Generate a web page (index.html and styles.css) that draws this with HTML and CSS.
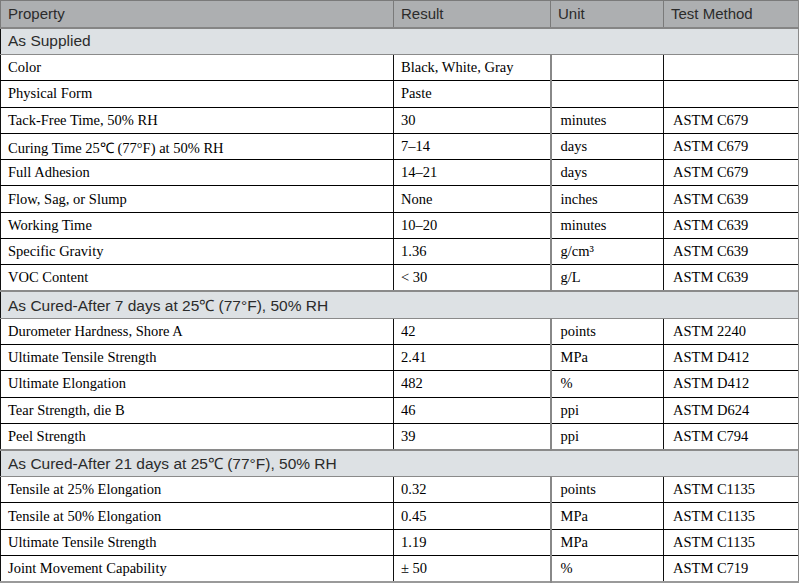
FILE: index.html
```html
<!DOCTYPE html>
<html lang="en">
<head>
    <meta charset="UTF-8">
    <meta name="viewport" content="width=device-width, initial-scale=1.0">
    <title>Technical Data</title>
    <link rel="stylesheet" href="styles.css">
</head>
<body>

<table class="spec-table">
    <colgroup>
        <col class="col-prop">
        <col class="col-result">
        <col class="col-unit">
        <col class="col-method">
    </colgroup>
    <thead>
        <tr class="head-row">
            <th>Property</th>
            <th>Result</th>
            <th>Unit</th>
            <th>Test Method</th>
        </tr>
    </thead>
    <tbody>
        <tr class="section-row"><td colspan="4">As Supplied</td></tr>
        <tr><td>Color</td><td>Black, White, Gray</td><td></td><td></td></tr>
        <tr><td>Physical Form</td><td>Paste</td><td></td><td></td></tr>
        <tr><td>Tack-Free Time, 50% RH</td><td>30</td><td>minutes</td><td>ASTM C679</td></tr>
        <tr><td>Curing Time 25℃ (77°F) at 50% RH</td><td>7–14</td><td>days</td><td>ASTM C679</td></tr>
        <tr><td>Full Adhesion</td><td>14–21</td><td>days</td><td>ASTM C679</td></tr>
        <tr><td>Flow, Sag, or Slump</td><td>None</td><td>inches</td><td>ASTM C639</td></tr>
        <tr><td>Working Time</td><td>10–20</td><td>minutes</td><td>ASTM C639</td></tr>
        <tr><td>Specific Gravity</td><td>1.36</td><td>g/cm³</td><td>ASTM C639</td></tr>
        <tr><td>VOC Content</td><td>&lt; 30</td><td>g/L</td><td>ASTM C639</td></tr>

        <tr class="section-row"><td colspan="4">As Cured-After 7 days at 25℃ (77°F), 50% RH</td></tr>
        <tr><td>Durometer Hardness, Shore A</td><td>42</td><td>points</td><td>ASTM 2240</td></tr>
        <tr><td>Ultimate Tensile Strength</td><td>2.41</td><td>MPa</td><td>ASTM D412</td></tr>
        <tr><td>Ultimate Elongation</td><td>482</td><td>%</td><td>ASTM D412</td></tr>
        <tr><td>Tear Strength, die B</td><td>46</td><td>ppi</td><td>ASTM D624</td></tr>
        <tr><td>Peel Strength</td><td>39</td><td>ppi</td><td>ASTM C794</td></tr>

        <tr class="section-row"><td colspan="4">As Cured-After 21 days at 25℃ (77°F), 50% RH</td></tr>
        <tr><td>Tensile at 25% Elongation</td><td>0.32</td><td>points</td><td>ASTM C1135</td></tr>
        <tr><td>Tensile at 50% Elongation</td><td>0.45</td><td>MPa</td><td>ASTM C1135</td></tr>
        <tr><td>Ultimate Tensile Strength</td><td>1.19</td><td>MPa</td><td>ASTM C1135</td></tr>
        <tr><td>Joint Movement Capability</td><td>± 50</td><td>%</td><td>ASTM C719</td></tr>
    </tbody>
</table>

</body>
</html>
```

FILE: styles.css
```css
* {
    margin: 0;
    padding: 0;
    box-sizing: border-box;
}

body {
    background: #fff;
    font-family: "Liberation Serif", "Times New Roman", serif;
    overflow: hidden;
}

.spec-table {
    width: 798px;
    border-collapse: collapse;
    table-layout: fixed;
    border-left: 1px solid #8a8a8a;
    border-right: 2px solid #8a8a8a;
    border-top: 1px solid #8a8a8a;
    border-bottom: 2px solid #9a9a9a;
}

.col-prop { width: 393px; }
.col-result { width: 157px; }
.col-unit { width: 113px; }
.col-method { width: 135px; }

.spec-table td,
.spec-table th {
    height: 26.3px;
    padding: 0 7px;
    text-align: left;
    vertical-align: middle;
    font-size: 14.5px;
    font-weight: normal;
    color: #000;
    white-space: nowrap;
    border-top: 1px solid #000;
    border-bottom: 1px solid #000;
    border-left: 1px solid #111;
    border-right: 1px solid #111;
}

.spec-table td:nth-child(2) {
    border-right: 2px solid #888;
}

.spec-table td:nth-child(3),
.spec-table td:nth-child(4) {
    padding-left: 9px;
}

.head-row th {
    background: #adafb1;
    font-family: "Liberation Sans", Arial, sans-serif;
    font-size: 15px;
    color: #2b2b2b;
    border: 1px solid #7a7a7a;
    border-bottom: 2px solid #858585;
    height: 27px;
}

.section-row td {
    background: #dde1e4;
    font-family: "Liberation Sans", Arial, sans-serif;
    font-size: 15.5px;
    color: #2b2b2b;
    border-top: 2px solid #8a8a8a;
    border-bottom: 1px solid #8a8a8a;
    height: 27px;
}
```
